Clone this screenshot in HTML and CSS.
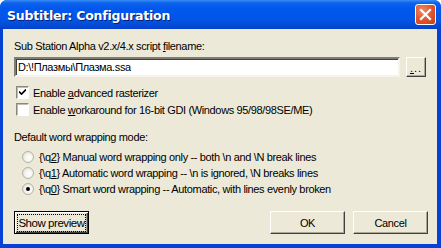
FILE: index.html
```html
<!DOCTYPE html>
<html lang="en">
<head>
    <meta charset="UTF-8">
    <title>Subtitler: Configuration</title>
    <link rel="stylesheet" href="styles.css">
</head>
<body>
    <div class="window">
        <div class="titlebar">
            <span class="title">Subtitler: Configuration</span>
            <span class="close">
                <svg width="13" height="13" viewBox="0 0 13 13">
                    <path d="M2 2 L11 11 M11 2 L2 11" stroke="#fff" stroke-width="2.2" stroke-linecap="square"/>
                </svg>
            </span>
        </div>
        <div class="client">
            <div class="label">Sub Station Alpha v2.x/4.x script <u>f</u>ilename:</div>
            <div class="file-row">
                <div class="input">D:\!Плазмы\Плазма.ssa</div>
                <div class="button browse"><span><u>.</u>..</span></div>
            </div>

            <div class="checks">
                <div class="check"><span class="box checked">
                    <svg width="7" height="7" viewBox="0 0 7 7"><path d="M0 2.5 L2.5 5 L7 0.5" stroke="#000" stroke-width="1.6" fill="none"/></svg>
                </span><span>Enable <u>a</u>dvanced rasterizer</span></div>
                <div class="check"><span class="box"></span><span>Enable <u>w</u>orkaround for 16-bit GDI (Windows 95/98/98SE/ME)</span></div>
            </div>

            <div class="label group-label">Default word wrapping mode:</div>
            <div class="radios">
                <div class="radio"><span class="dot"></span><span>{\q<u>2</u>} Manual word wrapping only -- both \n and \N break lines</span></div>
                <div class="radio"><span class="dot"></span><span>{\q<u>1</u>} Automatic word wrapping -- \n is ignored, \N breaks lines</span></div>
                <div class="radio"><span class="dot selected"></span><span>{\q<u>0</u>} Smart word wrapping -- Automatic, with lines evenly broken</span></div>
            </div>

            <div class="footer">
                <div class="button default"><span class="focus">Show preview</span></div>
                <div class="spacer"></div>
                <div class="button">OK</div>
                <div class="button">Cancel</div>
            </div>
        </div>
    </div>
</body>
</html>
```

FILE: styles.css
```css
body {
    margin: 0;
    font-family: "Liberation Sans", Arial, sans-serif;
    font-size: 11px;
    letter-spacing: -0.35px;
    color: #000;
    background: #fff;
}
.window {
    width: 441px;
    height: 248px;
    display: flex;
    flex-direction: column;
    background: #0842d4;
    border-radius: 7px 7px 0 0;
    box-sizing: border-box;
    overflow: hidden;
}
.titlebar {
    height: 29px;
    flex: none;
    display: flex;
    align-items: center;
    padding: 0 5px 0 7px;
    background: linear-gradient(#3a8cf6 0, #0d62ea 3px, #0058ee 8px, #0355e6 20px, #0449d2 26px, #0440c6 29px);
}
.title {
    flex: 1;
    color: #fff;
    font-family: "DejaVu Sans", sans-serif;
    font-weight: bold;
    font-size: 12.5px;
    letter-spacing: -0.2px;
    text-shadow: 1px 1px 0 #0a1f7a;
    padding-top: 1px;
}
.close {
    width: 21px;
    height: 21px;
    box-sizing: border-box;
    border: 1px solid #fff;
    border-radius: 3px;
    background: radial-gradient(circle at 35% 30%, #f08a6a 0, #e35a30 45%, #c83c14 100%);
    display: flex;
    align-items: center;
    justify-content: center;
}
.client {
    flex: 1;
    margin: 0 4px 4px 3px;
    background: #ece9d8;
    padding: 11px 9px 10px 11px;
    display: flex;
    flex-direction: column;
}
.label {
    height: 13px;
    line-height: 13px;
}
.file-row {
    display: flex;
    gap: 6px;
    margin-top: 4px;
}
.input {
    flex: 1;
    height: 20px;
    box-sizing: border-box;
    background: #fff;
    border: 2px solid;
    border-color: #7f7d74 #f5f3ea #f5f3ea #7f7d74;
    box-shadow: inset 1px 1px 0 #404040;
    padding: 1px 2px;
    line-height: 15px;
}
.button {
    height: 23px;
    width: 75px;
    box-sizing: border-box;
    border: 1px solid;
    border-color: #fff #404040 #404040 #fff;
    box-shadow: inset -1px -1px 0 #aca899;
    display: flex;
    align-items: center;
    justify-content: center;
    background: #ece9d8;
    white-space: nowrap;
    font-size: 11px;
}
.browse {
    width: 20px;
    height: 20px;
    margin-right: 2px;
    letter-spacing: 1px;
    padding-top: 2px;
}
.checks {
    margin-top: 9px;
    display: flex;
    flex-direction: column;
    gap: 4px;
}
.check {
    display: flex;
    align-items: center;
    height: 13px;
    padding-left: 2px;
    white-space: pre;
}
.box {
    width: 13px;
    height: 13px;
    box-sizing: border-box;
    border: 1px solid;
    border-color: #8a8878 #fff #fff #8a8878;
    box-shadow: inset 1px 1px 0 #c0bdb0;
    background: #fff;
    margin-right: 4px;
    display: flex;
    align-items: center;
    justify-content: center;
}
.group-label {
    margin-top: 15px;
}
.radios {
    margin-top: 6px;
    padding-left: 8px;
    display: flex;
    flex-direction: column;
    gap: 3px;
}
.radio {
    display: flex;
    align-items: center;
    height: 13px;
    white-space: pre;
}
.dot {
    width: 12px;
    height: 12px;
    border-radius: 50%;
    box-sizing: border-box;
    border: 1px solid #b4b2a6;
    background: radial-gradient(circle at 60% 60%, #fff 0, #f2f1ea 50%, #d6d4c8 100%);
    margin-right: 5px;
    display: flex;
    align-items: center;
    justify-content: center;
}
.dot.selected::after {
    content: "";
    width: 4px;
    height: 4px;
    border-radius: 50%;
    background: #000;
}
.footer {
    margin-top: auto;
    display: flex;
    gap: 8px;
    align-items: center;
}
.spacer {
    flex: 1;
}
.button.default {
    border: 1px solid #000;
    box-shadow: inset 1px 1px 0 #fff, inset -1px -1px 0 #404040, inset -2px -2px 0 #aca899;
    font-size: 11.5px;
    letter-spacing: -0.45px;
}
.focus {
    border: 1px dotted #000;
    padding: 1px 0;
    line-height: 14px;
}
u {
    text-decoration-thickness: 1px;
    text-underline-offset: 1px;
}
```
